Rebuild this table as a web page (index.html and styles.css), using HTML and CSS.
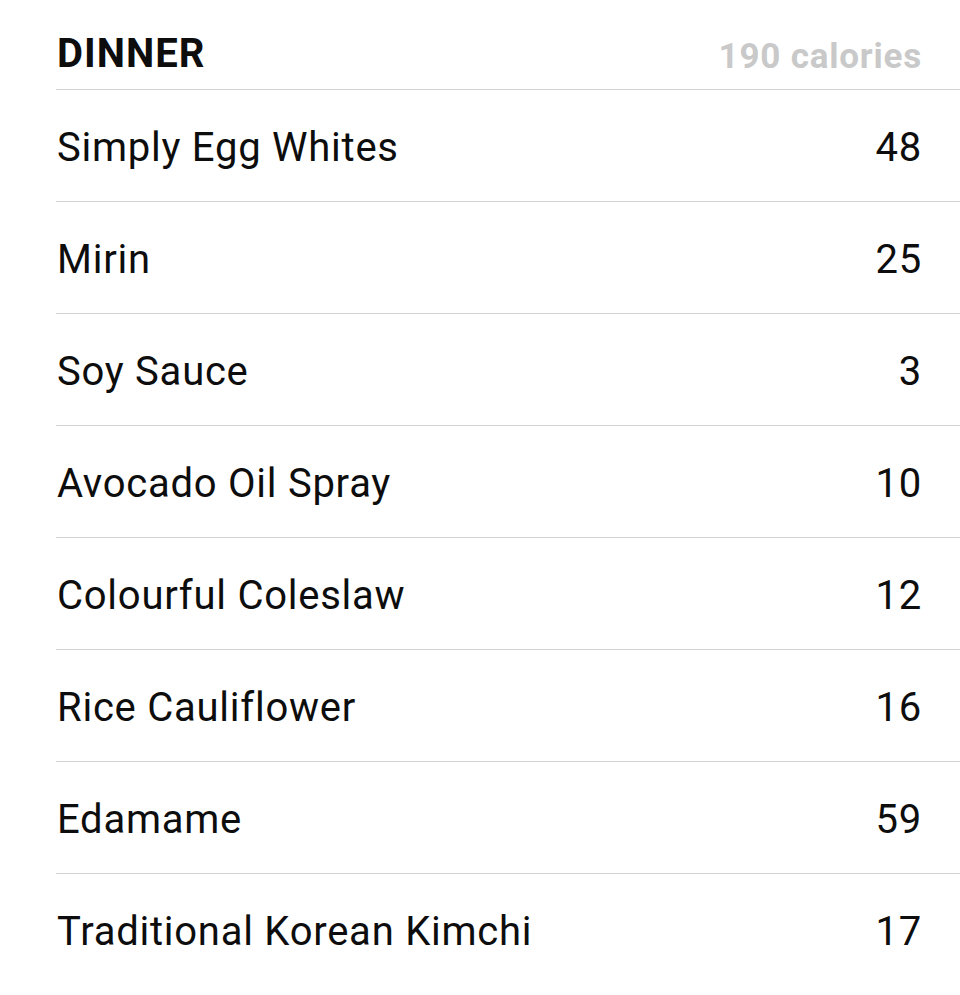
FILE: index.html
```html
<!DOCTYPE html>
<html>
<head>
<meta charset="utf-8">
<link rel="stylesheet" href="styles.css">
</head>
<body>
<div class="meal">
  <div class="meal-header">
    <span class="meal-title">DINNER</span>
    <span class="meal-total">190 calories</span>
  </div>
  <div class="item"><span class="item-name">Simply Egg Whites</span><span class="item-cal">48</span></div>
  <div class="item"><span class="item-name">Mirin</span><span class="item-cal">25</span></div>
  <div class="item"><span class="item-name">Soy Sauce</span><span class="item-cal">3</span></div>
  <div class="item"><span class="item-name">Avocado Oil Spray</span><span class="item-cal">10</span></div>
  <div class="item"><span class="item-name">Colourful Coleslaw</span><span class="item-cal">12</span></div>
  <div class="item"><span class="item-name">Rice Cauliflower</span><span class="item-cal">16</span></div>
  <div class="item"><span class="item-name">Edamame</span><span class="item-cal">59</span></div>
  <div class="item last"><span class="item-name">Traditional Korean Kimchi</span><span class="item-cal">17</span></div>
</div>
</body>
</html>
```
FILE: styles.css
```css
html, body {
  margin: 0;
  padding: 0;
  background: #ffffff;
}
body {
  font-family: Roboto, "Liberation Sans", sans-serif;
  color: #111111;
}
.meal {
  padding-left: 56px;
}
.meal-header {
  box-sizing: border-box;
  height: 90px;
  display: flex;
  justify-content: space-between;
  align-items: flex-end;
  padding: 0 38px 12px 1px;
  border-bottom: 1px solid #d4d4d4;
}
.meal-title {
  font-size: 40px;
  font-weight: 700;
  letter-spacing: 1px;
  color: #0d0d0d;
}
.meal-total {
  font-size: 35px;
  font-weight: 700;
  letter-spacing: 0.8px;
  color: #c9c9c9;
}
.item {
  box-sizing: border-box;
  height: 112px;
  display: flex;
  justify-content: space-between;
  align-items: center;
  padding: 3px 38px 0 1px;
  border-bottom: 1px solid #d4d4d4;
  font-size: 40px;
  letter-spacing: 0.75px;
  color: #0d0d0d;
}
.item.last {
  border-bottom: none;
}
```
